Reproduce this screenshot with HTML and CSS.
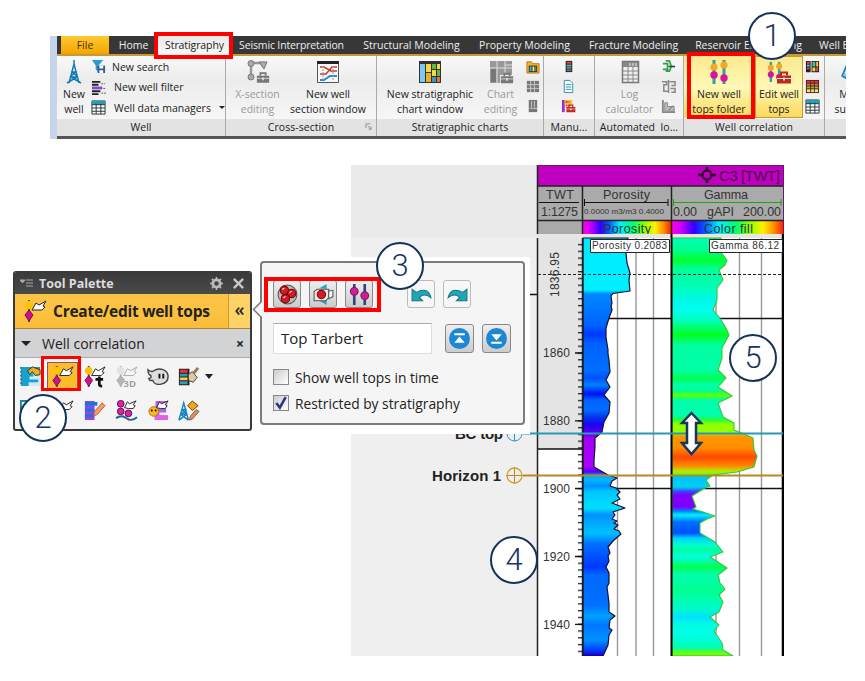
FILE: index.html
```html
<!DOCTYPE html>
<html lang="en">
<head>
<meta charset="utf-8">
<title>Well tops workflow</title>
<link rel="stylesheet" href="styles.css">
</head>
<body>
<svg class="defs" width="0" height="0" aria-hidden="true">
  <defs>
    <symbol id="bird" viewBox="0 0 14 10"><path d="M1 8 4 2l2 2 7-3-3 4 2 1-2 3H5z" fill="#fff" stroke="#222"/></symbol>
    <symbol id="top" viewBox="0 0 24 24"><path d="M6 1v22" stroke="#456" stroke-width="2"/><circle cx="6" cy="6" r="4" fill="#ffc400"/><path d="m6 11 4 5-4 6-4-6z" fill="#c8148c" stroke="#8c0064"/><path d="m9 11 4-7 3 2 7-4-3 5 2 1-3 3z" fill="#fff" stroke="#222"/></symbol>
    <symbol id="table" viewBox="0 0 16 16"><path d="M1 1h14v14H1z" fill="#fff" stroke="#233"/><path d="M1 1h14v4H1z" fill="#22a0b4"/><path d="M1 5h14M1 8.5h14M1 12h14M5.500 4v11M10.500 4v11" stroke="#233"/></symbol>
    <symbol id="tops" viewBox="0 0 24 26"><path d="M7 1v24M17 1v24" stroke="#29a2a8" stroke-width="3"/><circle cx="7" cy="8" r="3.600" fill="#f5a623"/><circle cx="17" cy="6" r="3.600" fill="#f5a623"/><circle cx="7" cy="16" r="3.700" fill="#d8149c"/><circle cx="17" cy="19" r="3.700" fill="#d8149c"/></symbol>
    <symbol id="box" viewBox="0 0 16 12"><path d="M5 4V1h6v3" fill="none" stroke="currentColor" stroke-width="2"/><path d="M1 4h14v8H1z" fill="currentColor"/><path d="M1 7h14" stroke="#ddd"/><path d="M7 6h2v3H7z" fill="#ddd"/></symbol>
    <symbol id="loggray" viewBox="0 0 16 16"><path d="M1 3h5v3H3v7h4M8 1v14M9 3h6v4h-4M10 10h5v4h-4" fill="none" stroke="#888" stroke-width="1.600"/></symbol>
  </defs>
</svg>
<main class="figure">

<section class="ribbon">
  <nav class="tabs">
    <span class="tab file">File</span><span class="tab home">Home</span><span class="tab active">Stratigraphy</span><span class="tab seismic">Seismic Interpretation</span><span class="tab structural">Structural Modeling</span><span class="tab property">Property Modeling</span><span class="tab fracture">Fracture Modeling</span><span class="tab reservoir">Reservoir Engineering</span><span class="tab welleng">Well E</span>
  </nav>
  <div class="groups">
    <div class="group g-well">
      <div class="tools">
        <div class="big b-well">
          <svg viewBox="0 0 26 26"><path d="m8 24 5-19 5 19M9 18h8M10 13h6M9 18l6-5M17 18l-6-5M6 24l10-6M20 24 10 18M13 1v5" fill="none" stroke="#167ab0" stroke-width="1.500"/></svg>
          <span>New<br>well</span>
        </div>
        <ul class="list">
          <li><svg viewBox="0 0 16 16"><path d="M1 1h12L8 7v7l-3-3V7z" fill="#2a9ed0"/><path d="M7 7h8v8H7z" fill="#335f90"/><path d="M9 7h4v3H9zM9 12h4v3H9z" fill="#fff"/></svg>New search</li>
          <li class="l2"><svg viewBox="0 0 16 16"><path d="M1 2h9M1 5h7M1 12h9M1 15h7" stroke="#222" stroke-width="2"/><path d="M1 7h11v3H1z" fill="#84c"/><path d="M11 4h4M13 9h3M11 14h5" stroke="#555" stroke-dasharray="2 1"/></svg>New well filter</li>
          <li class="l3"><svg><use href="#table"/></svg>Well data managers<i class="caret"></i></li>
        </ul>
      </div>
      <footer>Well</footer>
    </div>
    <div class="group g-cross">
      <div class="tools">
        <div class="big b-x disabled">
          <svg viewBox="0 0 26 26"><path d="M6 18V4h12v4" fill="none" stroke="#999" stroke-width="2.500"/><g fill="#aaa" stroke="#777"><circle cx="6" cy="4.500" r="3"/><circle cx="6" cy="18" r="3"/><path d="m14 3 8 0-3 7z"/></g><svg x="11" y="13" width="14" height="11" color="#777"><use href="#box"/></svg></svg>
          <span>X-section<br>editing</span>
        </div>
        <div class="big b-sec">
          <svg viewBox="0 0 26 26"><path d="M2.500 3.500h21v20h-21z" fill="#f4f8fa" stroke="#555"/><path d="M2 2h22v3H2z" fill="#222"/><path d="M5 8h4l7 4h6M5 15h6l6-7h5" fill="none" stroke="#d03a24" stroke-width="1.500"/><path d="M5 21h4l6-4h7" fill="none" stroke="#2c8ad0" stroke-width="2"/><path d="M8 7v15M18 7v15" stroke="#999" stroke-dasharray="2 1"/></svg>
          <span>New well<br>section window</span>
        </div>
      </div>
      <footer>Cross-section<svg class="launcher" viewBox="0 0 8 8"><path d="M1 6V1h5M3 3l4 4M7 4v3H4" fill="none" stroke="#888"/></svg></footer>
    </div>
    <div class="group g-strat">
      <div class="tools">
        <div class="big b-strat">
          <svg viewBox="0 0 26 26"><path d="M2 2h22v22H2z" fill="#333"/><path d="M3 5h5v18H3z" fill="#7cc8f0"/><path d="M9 5h5v8H9z" fill="#f8d840"/><path d="M9 14h5v9H9z" fill="#e8b020"/><path d="M15 5h4v5h-4zM20 11h3v6h-3z" fill="#60b840"/><path d="M20 5h3v5h-3zM15 11h4v6h-4z" fill="#f8d840"/><path d="M15 18h4v5h-4z" fill="#3899d0"/><path d="M20 18h3v5h-3z" fill="#e67528"/></svg>
          <span>New stratigraphic<br>chart window</span>
        </div>
        <div class="big b-chart disabled">
          <svg viewBox="0 0 26 26"><path d="M2 2h22v14H12v8H2z" fill="#999"/><path d="M2 9h22M9 2v22M17 2v14M17 6h7" stroke="#ddd"/><path d="M3 10h5v13H3z" fill="#777"/><svg x="12" y="13" width="14" height="12" color="#777"><use href="#box"/></svg></svg>
          <span>Chart<br>editing</span>
        </div>
        <div class="minis">
          <svg viewBox="0 0 16 16"><path d="M2 3h5l1 2h7v10H2z" fill="#f6b62c" stroke="#b7791c"/><path d="M4 7h9v7H4z" fill="#333"/><path d="M5 8h2v5H5z" fill="#4ae"/><path d="M8 8h2v5H8z" fill="#fe5"/><path d="M11 8h1v5h-1z" fill="#5b4"/></svg>
          <svg viewBox="0 0 16 16"><path d="M2 2h13v12H2z" fill="#777"/><path d="M2 6h13M2 10h13M6 2v12M10 2v12" stroke="#ccc"/></svg>
          <svg viewBox="0 0 16 16"><path d="M4 1h9v13H4z" fill="#777"/><path d="M7 2v7M10 2v7M5 10h8" stroke="#ccc"/></svg>
        </div>
      </div>
      <footer>Stratigraphic charts</footer>
    </div>
    <div class="group g-manu">
      <div class="tools">
        <div class="minis">
          <svg viewBox="0 0 16 16"><path d="M5 2h7v12H5z" fill="#222"/><path d="M6 3h5v2H6z" fill="#e44"/><path d="M6 6h5v2H6z" fill="#4bd"/><path d="M6 9h5v1H6z" fill="#fc3"/><path d="M6 11h5v2H6z" fill="#57a"/></svg>
          <svg viewBox="0 0 16 16"><path d="M3.500 1.500h6l3 3v10h-9z" fill="#fff" stroke="#2890a8"/><path d="M5 6h6M5 8.500h6M5 11h6" stroke="#2890a8"/></svg>
          <svg viewBox="0 0 16 16"><path d="M1 1h3v13H1z" fill="#93c"/><path d="M4 1h8v5H4z" fill="#fb3"/><path d="M5 7h5M5 3h4" stroke="#d33" stroke-width="2" stroke-dasharray="2 1"/><svg x="5" y="5" width="11" height="10" color="#c42a1c"><use href="#box"/></svg></svg>
        </div>
      </div>
      <footer>Manu...</footer>
    </div>
    <div class="group g-auto">
      <div class="tools">
        <div class="big b-calc disabled">
          <svg viewBox="0 0 26 26"><path d="M5.500 2.500h16v21h-16z" fill="#eee" stroke="#777" stroke-width="1.500"/><path d="M6 3h15v5H6z" fill="#888"/><path d="M6 12h15M6 16h15M6 20h15M11 8v15M16 8v15" stroke="#888"/><path d="M13 4v3M16 4v3M19 4v3" stroke="#eee"/></svg>
          <span>Log<br>calculator</span>
        </div>
        <div class="minis">
          <svg viewBox="0 0 16 16"><path d="M2 5h5v6H2M5 2h4l2 6-2 5H5M7 8h8" fill="none" stroke="#3a9c40" stroke-width="1.800"/><path d="M9 8h6" stroke="#246" stroke-width="1.500"/></svg>
          <svg><use href="#loggray"/></svg>
          <svg viewBox="0 0 16 16"><path d="M2 1v13h13" fill="none" stroke="#888" stroke-width="2"/><path d="M4 4h3v4h7v5H4z" fill="#bbb" stroke="#888"/><path d="m8 12 5-5" stroke="#666"/></svg>
        </div>
      </div>
      <footer>Automated&nbsp; lo...</footer>
    </div>
    <div class="group g-corr">
      <div class="tools">
        <div class="big b-folder"><svg viewBox="0 0 24 26"><use href="#tops"/></svg><span>New well<br>tops folder</span></div>
        <div class="big b-edit"><svg viewBox="0 0 26 26"><svg x="-1" y="0" width="20" height="26"><use href="#tops"/></svg><svg x="10" y="12" width="16" height="13" color="#bd2a20"><use href="#box"/></svg></svg><span>Edit well<br>tops</span></div>
        <div class="minis">
          <svg viewBox="0 0 16 16"><path d="M1 2h5v12H1zM7 2h8v12H7z" fill="#222"/><path d="M2 3h3v2H2zM2 9h3v2H2z" fill="#e44"/><path d="M2 6h3v2H2z" fill="#4ce"/><path d="M8 3h3v5H8z" fill="#4c8"/><path d="M12 3h2v5h-2zM8 9h3v4H8z" fill="#fc4"/><path d="M12 9h2v4h-2z" fill="#e55"/></svg>
          <svg viewBox="0 0 16 16"><path d="M1 1h14v14H1z" fill="#522"/><path d="M2 2h12v2H2z" fill="#d34"/><path d="M2 5h12v2H2z" fill="#e8703a"/><path d="M2 8h12v2H2z" fill="#7c4"/><path d="M2 11h12v3H2z" fill="#fd6"/><path d="M6 2v12M10 2v12" stroke="#522"/></svg>
          <svg><use href="#table"/></svg>
        </div>
      </div>
      <footer>Well correlation</footer>
    </div>
    <div class="group g-last">
      <div class="tools"><div class="big b-make"><svg viewBox="0 0 26 26"><path d="M2 17 8 3l8-2 8 6v14l-10 3z" fill="#7fc4ee" stroke="#1d7bb8" stroke-width="1.500"/><path d="m6 15 5-9 5-1" fill="none" stroke="#e4f6ff" stroke-width="3"/></svg><span>Make<br>surface</span></div></div>
      <footer></footer>
    </div>
  </div>
</section>

<svg class="log" viewBox="351 165 433 491">
  <defs>
    <linearGradient id="rainbow"><stop offset="0" stop-color="#ff00e8"/><stop offset=".08" stop-color="#d000ff"/><stop offset=".2" stop-color="#3000ff"/><stop offset=".3" stop-color="#0060ff"/><stop offset=".42" stop-color="#00f0ff"/><stop offset=".58" stop-color="#00ff70"/><stop offset=".7" stop-color="#90ff00"/><stop offset=".82" stop-color="#fff000"/><stop offset=".93" stop-color="#ff8000"/><stop offset="1" stop-color="#ff2000"/></linearGradient>
    <linearGradient id="por" gradientUnits="userSpaceOnUse" x1="0" y1="200" x2="0" y2="700">
      <stop offset="7.600%" stop-color="#00e8ff"/><stop offset="18%" stop-color="#00f0ff"/><stop offset="18.800%" stop-color="#0088ff"/><stop offset="25%" stop-color="#0064ff"/><stop offset="26.800%" stop-color="#0038ff"/><stop offset="28.600%" stop-color="#0060ff"/><stop offset="34%" stop-color="#0070ff"/><stop offset="35.600%" stop-color="#0050ff"/><stop offset="37%" stop-color="#0080ff"/><stop offset="38.800%" stop-color="#0010f8"/><stop offset="40%" stop-color="#0064ff"/><stop offset="42%" stop-color="#006cff"/><stop offset="43.600%" stop-color="#0030f0"/><stop offset="45%" stop-color="#2000f0"/><stop offset="46.800%" stop-color="#6000f0"/><stop offset="47.600%" stop-color="#a000f0"/><stop offset="53.200%" stop-color="#b000ff"/><stop offset="54.400%" stop-color="#5800ff"/><stop offset="55%" stop-color="#00a0ff"/><stop offset="56%" stop-color="#00b8ff"/><stop offset="57.200%" stop-color="#0090ff"/><stop offset="58.400%" stop-color="#00c8ff"/><stop offset="61.600%" stop-color="#00e0ff"/><stop offset="63%" stop-color="#0090ff"/><stop offset="64.600%" stop-color="#00a8ff"/><stop offset="66.600%" stop-color="#00c0ff"/><stop offset="68.800%" stop-color="#0070ff"/><stop offset="73.400%" stop-color="#0038ff"/><stop offset="75%" stop-color="#0068ff"/><stop offset="81%" stop-color="#0070ff"/><stop offset="83.200%" stop-color="#00a0ff"/><stop offset="85%" stop-color="#0078ff"/><stop offset="88%" stop-color="#0090ff"/><stop offset="90%" stop-color="#0040ff"/><stop offset="91%" stop-color="#1800e0"/>
    </linearGradient>
    <linearGradient id="gam" gradientUnits="userSpaceOnUse" x1="0" y1="200" x2="0" y2="700">
      <stop offset="7.600%" stop-color="#00ffb8"/><stop offset="10%" stop-color="#00ff90"/><stop offset="12%" stop-color="#00ff30"/><stop offset="14%" stop-color="#00ffa0"/><stop offset="17%" stop-color="#00ffb0"/><stop offset="20%" stop-color="#00f8e8"/><stop offset="22%" stop-color="#00fff0"/><stop offset="24%" stop-color="#00ffc0"/><stop offset="27%" stop-color="#00ff20"/><stop offset="29%" stop-color="#00ffa0"/><stop offset="34%" stop-color="#00ffa8"/><stop offset="35.600%" stop-color="#00ff50"/><stop offset="37.200%" stop-color="#00ffb0"/><stop offset="38.200%" stop-color="#00ff90"/><stop offset="39%" stop-color="#60ff00"/><stop offset="40%" stop-color="#00ffa8"/><stop offset="43%" stop-color="#00ffb0"/><stop offset="44%" stop-color="#20ff40"/><stop offset="44.800%" stop-color="#90ff00"/><stop offset="46.400%" stop-color="#98ff00"/><stop offset="47.300%" stop-color="#ff9800"/><stop offset="49.600%" stop-color="#ff8c00"/><stop offset="51.400%" stop-color="#ff4800"/><stop offset="53.200%" stop-color="#ff8800"/><stop offset="54.200%" stop-color="#b8e800"/><stop offset="54.900%" stop-color="#60ff20"/><stop offset="55.200%" stop-color="#00c0ff"/><stop offset="57.400%" stop-color="#00d0f0"/><stop offset="58.300%" stop-color="#4040ff"/><stop offset="59%" stop-color="#8000ff"/><stop offset="61.400%" stop-color="#8000ff"/><stop offset="62.200%" stop-color="#0080ff"/><stop offset="63%" stop-color="#00f0ff"/><stop offset="64.400%" stop-color="#0070ff"/><stop offset="66.600%" stop-color="#0050ff"/><stop offset="67.600%" stop-color="#00d0ff"/><stop offset="69%" stop-color="#00ffd0"/><stop offset="70%" stop-color="#00ffa0"/><stop offset="71.400%" stop-color="#00ffe0"/><stop offset="73.400%" stop-color="#00ff50"/><stop offset="75%" stop-color="#00ffb0"/><stop offset="78%" stop-color="#00ff90"/><stop offset="80%" stop-color="#00ffb0"/><stop offset="82%" stop-color="#00f8d0"/><stop offset="83.400%" stop-color="#00e0ff"/><stop offset="85%" stop-color="#00ffe0"/><stop offset="87%" stop-color="#00ffe8"/><stop offset="89.600%" stop-color="#00ffb0"/><stop offset="90.400%" stop-color="#60ff20"/><stop offset="91%" stop-color="#70ff00"/>
    </linearGradient>
    <pattern id="ticks" patternUnits="userSpaceOnUse" x="577" y="237.100" width="6" height="6.780"><path d="M1 .7h5" stroke="#111" stroke-width="1.200"/></pattern>
  </defs>
  <path d="M351 165h186v491H351z" fill="#efefef"/>
  <path d="M351 165h186v72H351z" fill="#eaeaea"/>
  <!-- track headers -->
  <path d="M537 165h247v21H537z" fill="#c000c0"/>
  <path d="M537 186h247v48H537z" fill="#aaa"/>
  <rect x="583" y="221" width="88" height="13" fill="url(#rainbow)"/>
  <rect x="672" y="221" width="111" height="13" fill="url(#rainbow)"/>
  <path d="M537.500 165v69M537 186h247M537 220.500h247M582.500 186v48M671.500 186v48" stroke="#222" stroke-width="1.500" fill="none"/>
  <path d="M537 165.500h247M783.500 165v69" stroke="#602060"/>
  <path d="M539 202.500h40M584 202.500h84M584.500 199v7M668 199v7" stroke="#111"/>
  <path d="M673 202.500h109M673.500 199v7M781 199v7" stroke="#18a818"/>
  <path d="M698 175h18M707 167v16" stroke="#300030" stroke-width="2.500"/><circle cx="707" cy="175" r="4.500" fill="#c000c0" stroke="#300030" stroke-width="2.500"/>
  <g class="head">
    <text x="719" y="181" font-size="15" textLength="61" fill="#4c004c">C3 [TWT]</text>
    <text x="546" y="199" textLength="28">TWT</text>
    <text x="603" y="199" textLength="47">Porosity</text>
    <text x="704" y="199" textLength="44">Gamma</text>
    <text x="541" y="216" textLength="37">1:1275</text>
    <text x="584" y="214" font-size="8" textLength="80" lengthAdjust="spacingAndGlyphs">0.0000 m3/m3 0.4000</text>
    <text x="673" y="216" textLength="24">0.00</text>
    <text x="707" y="216" textLength="27">gAPI</text>
    <text x="743" y="216" textLength="38">200.00</text>
    <text x="603" y="233" textLength="48">Porosity</text>
    <text x="704" y="233" textLength="49">Color fill</text>
  </g>
  <!-- depth scale and tracks -->
  <path d="M537 234h247v4H537z" fill="#e6e6e6"/>
  <path d="M538 238h45v418h-45z" fill="#fff"/>
  <path d="M538 238h45v211h-45z" fill="#e4e4e4"/>
  <path d="M583 238h200v418H583z" fill="#fff"/>
  <path d="M617.500 238v418M636 238v418M653.500 238v418M716 238v418M739.500 238v418M761.500 238v418" stroke="#999" stroke-width="1.400"/>
  <path d="M583 318.500h200M583 488.500h200M537 449h46M530 294.500h7" stroke="#111" stroke-width="1.300"/>
  <path fill="url(#por)" stroke="#113" stroke-width="1.200" stroke-linejoin="round" d="M583 238H628L626 253 627 263 630 273 629 280 630 291 613 293.500 611 296 612 303 611 306 612 310 609 318 606 328 606 337 608 350 608 354 609 360 610 372 606 380 610 387 604 395 610 402 609 413 604 422 602 432 595 438 595 447 594 460 594 467 601 471 608 475 617 478 612 481 610 486 616 488 620 492 617 495 620 499 612 503 617 505 625 508 613 512 615 515 612 519 617 521 614 523 618 525 614 529 619 531 621 534 613 541 608 547 610 553 608 556 609 561 606 567 609 573 609 583 607 587 609 603 609 612 615 616 610 620 609 628 612 630 609 635 608 645 603 656H583z"/>
  <path fill="url(#gam)" stroke="#35c835" stroke-width="1.100" stroke-linejoin="round" d="M672 238H721L722 254 727 260 725 265 719 270 723 280 717 288 717 300 713 310 719 317 726 328 729 335 722 348 722 358 718 370 726 378 718 387 732 396 718 403 723 417 734 423 734 430 744 434 753 438 754 450 757 456 754 467 737 472 713 475 706 480 710 486 705 488 692 496 696 507 693 509 703 512 715 516 707 519 700 523 700 533 715 542 723 552 710 557 727 568 718 575 720 583 725 589 719 595 723 602 719 612 710 617 719 625 714 631 722 643 723 650 733 656H672z"/>
  <path d="M537.500 238v418M582.500 238v418" stroke="#222" stroke-width="1.500"/>
  <path d="M671.500 234v422" stroke="#000" stroke-width="2"/><path d="M783 234v422" stroke="#000" stroke-width="2.500"/>
  <rect x="577" y="241" width="6" height="415" fill="url(#ticks)"/>
  <path d="M575 353h7M575 420.800h7M575 488.500h7M575 556.500h7M575 624.300h7" stroke="#111" stroke-width="1.300"/>
  <path d="M538 274.500h245" stroke="#222" stroke-dasharray="3 2"/>
  <path d="M590.500 239.500h79v13h-79zM709.500 239.500h73v13h-73z" fill="#fff" stroke="#222"/>
  <g class="scale">
    <text x="592" y="249" font-size="10" textLength="75">Porosity 0.2083</text>
    <text x="711" y="249" font-size="10" textLength="68">Gamma 86.12</text>
    <text transform="translate(559 297) rotate(-90)" textLength="45">1836.95</text>
    <text x="543" y="357" textLength="27">1860</text><text x="543" y="425" textLength="27">1880</text><text x="543" y="493" textLength="27">1900</text><text x="543" y="561" textLength="27">1920</text><text x="543" y="628.500" textLength="27">1940</text>
  </g>
  <!-- well tops -->
  <path d="M523 433.500h260" stroke="#2b98ba" stroke-width="2"/><path d="M506 433.500h17M514.500 426v15" stroke="#2b98ba"/><circle cx="514.500" cy="433.500" r="7.500" fill="none" stroke="#2b98ba"/>
  <path d="M523 475.500h260" stroke="#b98820" stroke-width="2"/><path d="M506 475.500h17M514.500 467v17" stroke="#b98820"/><circle cx="514.500" cy="475.500" r="7.500" fill="none" stroke="#d0a030" stroke-width="1.300"/>
  <g class="tops-names"><text x="455" y="438.500" textLength="48">BC top</text><text x="432" y="481" textLength="69">Horizon 1</text></g>
  <path d="m691.500 413 9.500 10h-5v20h5l-9.500 11-9.500-11h5v-20h-5z" fill="#fff" stroke="#17365d" stroke-width="2.500"/>
</svg>

<div class="palette-shot">
  <section class="palette">
    <header><svg viewBox="0 0 14 10"><path d="M0 2h5L2.500 5zM6 2h7M6 5h7M6 8h7" fill="#aaa" stroke="#aaa"/></svg><b>Tool Palette</b>
      <svg class="gear" viewBox="0 0 14 14"><circle cx="7" cy="7" r="4" fill="none" stroke="#bbb" stroke-width="3"/><path d="M7 0v3M7 11v3M0 7h3M11 7h3M2 2l2 2M10 10l2 2M12 2l-2 2M2 12l2-2" stroke="#bbb" stroke-width="1.600"/></svg>
      <svg class="close" viewBox="0 0 14 14"><path d="m2 2 10 10M12 2 2 12" stroke="#c8c8c8" stroke-width="2.500"/></svg></header>
    <div class="current"><svg viewBox="0 0 24 24"><use href="#top"/></svg><b>Create/edit well tops</b><span class="fold">«</span></div>
    <div class="category"><i class="caret"></i><span>Well correlation</span><b>×</b></div>
    <div class="icons">
      <svg viewBox="0 0 24 24"><path d="M2 2h20v20H2z" fill="#18a0d0"/><path d="M8 9h7v3h-4v3h9v3H10v4h12V8z" fill="#c8ecfa"/><path d="m9 6 5-4 8 3v5l-5 1-3-4-3 3z" fill="#e8b020" stroke="#333"/><path d="M2 2v20" stroke="#333" stroke-dasharray="2 2"/></svg>
      <span class="selected"><svg viewBox="0 0 24 24"><use href="#top"/></svg></span>
      <svg viewBox="0 0 24 24"><use href="#top"/><path d="M17 12v8q0 2 3 2M13 15h8" fill="none" stroke="#111" stroke-width="2.800"/></svg>
      <svg class="faded" viewBox="0 0 24 24"><use href="#top"/><text x="9" y="23" font-size="10" font-weight="bold">3D</text></svg>
      <svg viewBox="0 0 24 24"><path d="M1 5q4 3 6 1c6-4 15-1 15 6 0 9-14 11-16 4q-4 1-4-2 3 0 2-3-3-1-3-6z" fill="#ddd" stroke="#444" stroke-width="1.500"/><path d="M13 9v5M17 9v5" stroke="#111" stroke-width="2"/></svg>
      <svg viewBox="0 0 24 24"><path d="M2 4h11v17H2z" fill="#222"/><path d="M3 5h8v3H3z" fill="#e33"/><path d="M3 9h8v3H3z" fill="#29b"/><path d="M3 13h8v3H3z" fill="#fc3"/><path d="M3 17h8v3H3z" fill="#39c"/><path d="m12 10 4-3 5 6-4 5-5-2z" fill="#ddc8ae" stroke="#542"/><path d="m17 9 5-6" stroke="#975" stroke-width="3"/></svg>
      <i class="caret"></i>
      <svg viewBox="0 0 24 24"><path d="M2 2h17v17H2z" fill="#fff" stroke="#289" stroke-width="2"/></svg>
      <svg viewBox="0 0 24 24"><use href="#top"/></svg>
      <svg viewBox="0 0 24 24"><path d="M2 2h10v20H2z" fill="#a040e0"/><path d="M2 3h13v4H2zM2 10h10v3H2zM2 16h9v3H2z" fill="#1478d8"/><path d="m11 18 1-5 8-9 3 3-8 9z" fill="#f0a060" stroke="#b55"/></svg>
      <svg viewBox="0 0 24 24"><circle cx="6" cy="5" r="3.500" fill="#d8289c" stroke="#606"/><circle cx="6" cy="13" r="3.500" fill="#d8289c" stroke="#606"/><circle cx="14" cy="15" r="3.500" fill="#d8289c" stroke="#606"/><path d="M1 20q6-4 11 0t11-1" fill="none" stroke="#268" stroke-width="2"/><svg x="9" y="1" width="14" height="10"><use href="#bird"/></svg></svg>
      <svg viewBox="0 0 24 24"><path d="M9 2h12v4H11v4h9v4h-7v3h8v5H8z" fill="#b060f0"/><path d="M8 17h14v5H8z" fill="#e060e8"/><circle cx="7" cy="13" r="5" fill="#f8b820" stroke="#b77500"/><circle cx="5" cy="12" r="1"/><circle cx="9" cy="12" r="1"/><svg x="9" y="1" width="14" height="10"><use href="#bird"/></svg></svg>
      <svg viewBox="0 0 24 24"><path d="m2 22 5-18 5 18M4 16h6M5 11h5M4 16l6-5M10 16l-5-5M2 22l8-6M12 22l-8-6" fill="none" stroke="#1682c0" stroke-width="1.500"/><path d="m16 2 6 5-6 5-5-5z" fill="#f0a818" stroke="#542"/><path d="m13 22 1-4 6-7 3 2-7 8z" fill="#d89460" stroke="#954"/></svg>
    </div>
  </section>

  <section class="popup">
    <div class="row actions">
      <span class="btn"><svg viewBox="0 0 22 22"><circle cx="11" cy="11" r="9" fill="#bdb9b5" stroke="#555"/><g fill="#d01c24" stroke="#700"><circle cx="8" cy="7" r="4"/><circle cx="15" cy="10" r="4"/><circle cx="9" cy="15" r="4"/></g><path d="m6 6 2-1M13 9l2-1M7 14l2-1" stroke="#fff"/></svg></span>
      <span class="btn"><svg viewBox="0 0 22 22"><path d="m7 5 7-4v5h4M14 16v5l-7-4" fill="#25a5c8"/><path d="m2 8 3-2h11v8l-3 3H2z" fill="#e8e8e8" stroke="#555"/><path d="m16 8 4-1v6l-4 2z" fill="#fff" stroke="#555"/><circle cx="9" cy="11" r="4" fill="#d01c24" stroke="#800"/></svg></span>
      <span class="btn"><svg viewBox="0 0 22 22"><path d="M6 1v20M16 1v20" stroke="#284878" stroke-width="2.500"/><circle cx="6" cy="8" r="3.700" fill="#d02090" stroke="#7a1768"/><circle cx="16" cy="12" r="3.700" fill="#d02090" stroke="#7a1768"/></svg></span>
      <span class="btn light undo"><svg viewBox="0 0 22 22"><path d="M2 6v11h10l-3-3q4-5 11 0Q17 3 6 9z" fill="#20a6b8" stroke="#127487"/></svg></span>
      <span class="btn light"><svg viewBox="0 0 22 22"><path d="M20 6v11H10l3-3q-4-5-11 0Q5 3 16 9z" fill="#20a6b8" stroke="#127487"/></svg></span>
    </div>
    <div class="row name"><span class="field">Top Tarbert</span>
      <span class="btn blue"><svg viewBox="0 0 22 22"><circle cx="11" cy="11" r="10" fill="#1c87d4"/><path d="M6 6h10v2H6zM11 9l5 6H6z" fill="#fff"/></svg></span>
      <span class="btn blue"><svg viewBox="0 0 22 22"><circle cx="11" cy="11" r="10" fill="#1c87d4"/><path d="M6 14h10v2H6zM6 7h10l-5 6z" fill="#fff"/></svg></span></div>
    <div class="check"><i></i>Show well tops in time</div>
    <div class="check"><i><svg viewBox="0 0 12 12"><path d="m2 6 3 4 5-9" fill="none" stroke="#303878" stroke-width="2.200"/></svg></i>Restricted by stratigraphy</div>
    <svg class="pointer" viewBox="0 0 10 18"><path d="M10 0 1.500 8.500 10 17" fill="#f5f5f5" stroke="#777" stroke-width="1.500"/></svg>
  </section>
</div>

<div class="mark m-tab"></div><div class="mark m-folder"></div><div class="mark thin m-tool"></div><div class="mark m-actions"></div>
<div class="callout c1">1</div><div class="callout c2">2</div><div class="callout c3">3</div><div class="callout c4">4</div><div class="callout c5">5</div>
</main>
</body>
</html>
```
FILE: styles.css
```css
* { box-sizing: border-box; }
body { margin: 0; background: #fff; font-family: "Open Sans", "Noto Sans", sans-serif; color: #222; }
.defs { position: absolute; }
.figure { position: relative; width: 865px; height: 681px; overflow: hidden; }
svg { display: block; }

/* ribbon */
.ribbon { position: absolute; left: 50px; top: 36px; width: 796px; height: 103px; overflow: hidden; border-left: 7px solid #c5d5ec; background: #555; font-size: 10.5px; }
.tabs { display: flex; height: 20px; padding-left: 4px; background: #373737; border-bottom: 2px solid #c69a35; color: #eee; line-height: 18px; white-space: nowrap; }
.tab { flex: none; text-align: center; overflow: hidden; }
.tab.file { width: 48px; background: linear-gradient(#ffc933, #f4a400); color: #4c3200; }
.tab.home { width: 48px; padding-left: 1px; }
.tab.active { width: 75px; height: 20px; background: linear-gradient(#e9e9e9, #fafafa); color: #222; letter-spacing: -.1px; }
.tab.seismic { width: 119px; letter-spacing: -.15px; } .structural { width: 121px; } .property { width: 105px; } .fracture { width: 113px; }
.reservoir { width: 117px; } .tab.welleng { width: 40px; text-align: left; padding-left: 12px; }
.groups { display: flex; height: 80px; }
.group { flex: none; display: flex; flex-direction: column; border-right: 1px solid #aaa; background: linear-gradient(#f9f9f9, #ececec 30%, #f6f6f6 78%); }
.tools { display: flex; height: 63px; padding-top: 2px; }
.group footer { flex: 1; position: relative; background: #e3e3e3; text-align: center; line-height: 16px; letter-spacing: .05px; white-space: nowrap; }
.big { flex: none; display: flex; flex-direction: column; align-items: center; text-align: center; line-height: 15px; letter-spacing: 0; white-space: nowrap; }
.big > svg { flex: none; width: 26px; height: 26px; margin: 1px 0 2px; }
.disabled { color: #999; }
.list { margin: 0; padding: 0; list-style: none; }
.list li { display: flex; align-items: center; gap: 6px; height: 17px; white-space: nowrap; }
.list .l2, .list .l3 { gap: 8px; margin-top: 3.500px; }
.list svg { flex: none; width: 15px; height: 15px; }
.caret { width: 0; height: 0; border: 3px solid transparent; border-top: 3px solid #222; border-bottom: 0; }
.minis { display: flex; flex-direction: column; gap: 5px; padding-top: 1px; }
.minis > svg { width: 15px; height: 15px; }
.g-well { width: 169px; } .g-cross { width: 151px; } .g-strat { width: 167px; } .g-manu { width: 51px; } .g-auto { width: 89px; } .g-corr { width: 141px; } .g-last { width: 60px; }
.b-well { width: 34px; } .b-x { width: 63px; } .b-sec { width: 78px; } .b-strat { width: 106px; } .b-chart { width: 35px; }
.g-strat .minis { margin-left: 7px; } .g-manu .minis { margin-left: 17px; }
.b-calc { width: 69px; } .g-auto .minis { margin-left: -3px; }
.g-corr .tools { padding-top: 0; }
.g-corr .big { padding-top: 2px; height: 62px; background: linear-gradient(#fce98e, #fff8b6 50%, #fbd95c); }
.g-corr .b-folder { width: 71px; padding-right: 1px; }
.g-corr .b-edit { width: 48px; padding-top: 1px; border: 1px solid #c39a36; letter-spacing: -.1px; }
.g-corr .minis { margin-left: 2px; padding-top: 3px; }
.b-make { width: 55px; }
.launcher { position: absolute; right: 4px; top: 4px; width: 7px; height: 7px; }

/* well log */
.log { position: absolute; left: 351px; top: 165px; width: 433px; height: 491px; font-family: "Liberation Sans", Arial, sans-serif; }
.head { font-size: 12.5px; fill: #333; }
.scale { font-size: 12px; fill: #333; }
.tops-names { font-size: 15px; font-weight: bold; fill: #222; }

/* tool palette with its options popup */
.palette-shot { position: absolute; left: 8px; top: 257px; width: 522px; height: 177px; background: #fff; }
.palette { position: absolute; left: 5px; top: 14px; width: 239px; height: 160px; border: 2px solid #3a3a3a; border-top-width: 1px; border-radius: 3px; background: #f4f4f4; overflow: hidden; }
.palette header { display: flex; align-items: center; height: 22px; padding: 0 5px; background: linear-gradient(#3a3a3a, #4a4a4a); color: #ddd; font-size: 12.5px; }
.palette header b { flex: 1; margin-left: 5px; letter-spacing: 0; }
.palette header svg { width: 14px; height: 10px; }
.palette header .gear { width: 13px; height: 13px; margin-right: 9px; }
.palette header .close { width: 13px; height: 13px; }
.current { display: flex; align-items: center; height: 35px; padding-left: 8px; background: linear-gradient(#fcc548, #fbbd38); border-bottom: 1px solid #a98439; font-size: 15.5px; color: #222; }
.current svg { width: 24px; height: 24px; }
.current b { flex: 1; margin-left: 6px; letter-spacing: -.25px; white-space: nowrap; }
.fold { width: 22px; height: 34px; line-height: 30px; text-align: center; background: #fdd266; border-left: 1px solid #c79a40; font-size: 18px; font-weight: 600; }
.category { display: flex; align-items: center; height: 29px; padding: 0 6px; background: #d2d3d5; border-bottom: 1px solid #aaa; font-size: 14px; }
.category .caret { border-width: 5px 5px 0; }
.category span { flex: 1; margin-left: 11px; }
.icons { display: grid; grid-template-columns: 32px 32px 32px 32px 30px 28px 20px; grid-auto-rows: 34px; align-items: center; padding: 1px 0 0 4px; }
.icons > svg, .selected > svg { width: 23px; height: 23px; }
.icons .caret { border-width: 5px 4.500px 0; }
.selected { width: 31px; height: 28px; padding: 2px 3px; margin-left: -4px; background: #fdbc2c; border: 1px solid #856; }
.faded { opacity: .35; filter: grayscale(1); }
.popup { position: absolute; left: 252px; top: 4px; width: 265px; height: 164px; padding: 17px 0 0 11px; background: #f5f5f5; border: 2px solid #7c7c7c; border-radius: 4px; font-size: 14px; }
.row { display: flex; align-items: center; }
.btn { flex: none; display: flex; align-items: center; justify-content: center; width: 28px; height: 28px; border: 1px solid #888; border-radius: 3px; background: linear-gradient(#eee, #ccc); }
.btn svg { width: 23px; height: 23px; }
.actions { gap: 8px; }
.btn.light { background: #f7f7f7; border-color: #bbb; }
.undo { margin-left: 26px; }
.name { margin-top: 15px; }
.field { flex: none; width: 159px; height: 31px; padding-left: 7px; margin-right: 13px; border: 1px solid #ddd; border-top-color: #aaa; background: #fff; line-height: 29px; font-size: 15px; }
.btn.blue { width: 29px; height: 29px; margin-right: 8px; }
.check { display: flex; align-items: center; height: 26px; font-size: 13.8px; gap: 6px; white-space: nowrap; }
.name + .check { margin-top: 10px; }
.check i { width: 16px; height: 16px; border: 1px solid #888; background: linear-gradient(135deg, #ccc, #fff); }
.check svg { width: 14px; height: 14px; }
.pointer { position: absolute; left: -10px; top: 38px; width: 10px; height: 18px; }

/* annotations */
.mark { position: absolute; border: 4px solid #f00; }
.mark.thin { border-width: 3px; }
.m-tab { left: 154px; top: 32px; width: 79px; height: 27px; }
.m-folder { left: 687px; top: 52px; width: 68px; height: 67px; }
.m-tool { left: 41px; top: 356px; width: 40px; height: 35px; }
.m-actions { left: 264px; top: 277px; width: 117px; height: 35px; }
.callout { position: absolute; width: 48px; height: 48px; border: 2.500px solid #14325a; border-radius: 50%; background: #fff; color: #17365d; font: 300 31px/44px Roboto, sans-serif; text-align: center; }
.c1 { left: 748px; top: 12px; } .c2 { left: 19px; top: 394px; } .c3 { left: 376px; top: 242px; } .c4 { left: 490px; top: 536px; } .c5 { left: 729px; top: 334px; }
```
